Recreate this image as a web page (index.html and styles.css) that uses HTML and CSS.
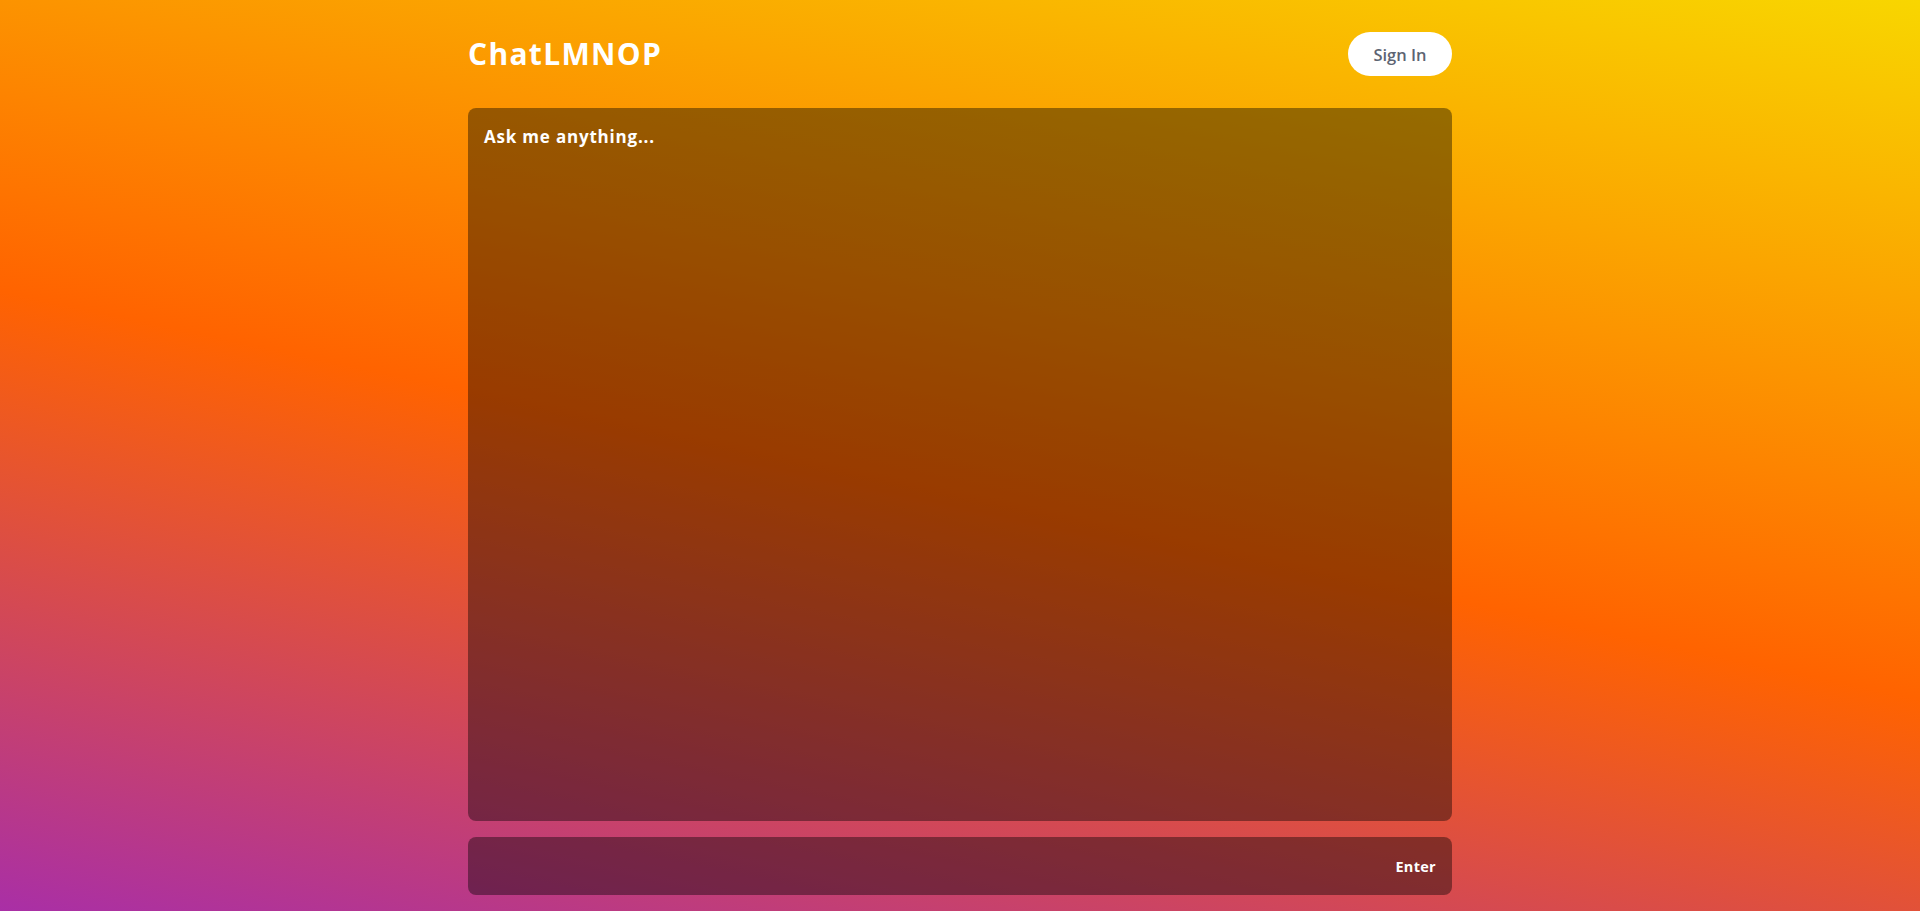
FILE: index.html
```html
<!DOCTYPE html>
<html lang="en">
<head>
<meta charset="utf-8">
<title>ChatLMNOP</title>
<link rel="stylesheet" href="styles.css">
</head>
<body>
<div class="page">
  <header class="header">
    <h1 class="logo">ChatLMNOP</h1>
    <button class="signin">Sign In</button>
  </header>
  <main class="chat">
    <textarea class="output" placeholder="Ask me anything..." readonly></textarea>
    <form class="inputbar">
      <input class="prompt" type="text" aria-label="Prompt">
      <button class="enter" type="button">Enter</button>
    </form>
  </main>
</div>
</body>
</html>
```

FILE: styles.css
```css
* { box-sizing: border-box; }
html, body { height: 100%; }
body {
  margin: 0;
  background: linear-gradient(12deg, #a92fa6 0%, #ff6300 47%, #f8d600 100%);
  font-family: "Open Sans", "Liberation Sans", sans-serif;
  overflow: hidden;
}
.page {
  width: 984px;
  margin: 0 auto;
  padding-top: 32px;
  height: 100%;
  display: flex;
  flex-direction: column;
}
.header {
  display: flex;
  align-items: center;
  justify-content: space-between;
  height: 44px;
}
.logo {
  margin: 0;
  color: #fff;
  font-family: "Open Sans", "DejaVu Sans", sans-serif;
  font-weight: 700;
  font-size: 30px;
  letter-spacing: 1.3px;
  line-height: 1;
}
.signin {
  width: 104px;
  height: 44px;
  border: none;
  border-radius: 22px;
  background: #fff;
  color: #5d6472;
  font-family: "Open Sans", sans-serif;
  font-weight: 600;
  font-size: 16.5px;
  padding: 0;
}
.chat {
  margin-top: 32px;
  display: flex;
  flex-direction: column;
  gap: 16px;
}
.output {
  display: block;
  width: 100%;
  height: 713px;
  border: none;
  border-radius: 8px;
  background: rgba(0, 0, 0, 0.4);
  color: #fff;
  resize: none;
  outline: none;
  padding: 17px 16px 16px;
  font-family: "Open Sans", sans-serif;
  font-weight: 700;
  font-size: 17px;
  letter-spacing: 0.8px;
}
.output::placeholder { color: #fff; opacity: 1; }
.inputbar {
  margin: 0;
  height: 58px;
  border-radius: 8px;
  background: rgba(0, 0, 0, 0.4);
  display: flex;
  align-items: center;
  padding: 0 16px;
  gap: 12px;
}
.prompt {
  flex: 1;
  height: 100%;
  border: none;
  background: transparent;
  outline: none;
  color: #fff;
  font-family: "Open Sans", sans-serif;
  font-size: 16px;
  padding: 0;
}
.enter {
  border: none;
  background: transparent;
  color: #fff;
  font-family: "Open Sans", sans-serif;
  font-weight: 700;
  font-size: 14.5px;
  letter-spacing: 0.3px;
  padding: 0;
}
```
